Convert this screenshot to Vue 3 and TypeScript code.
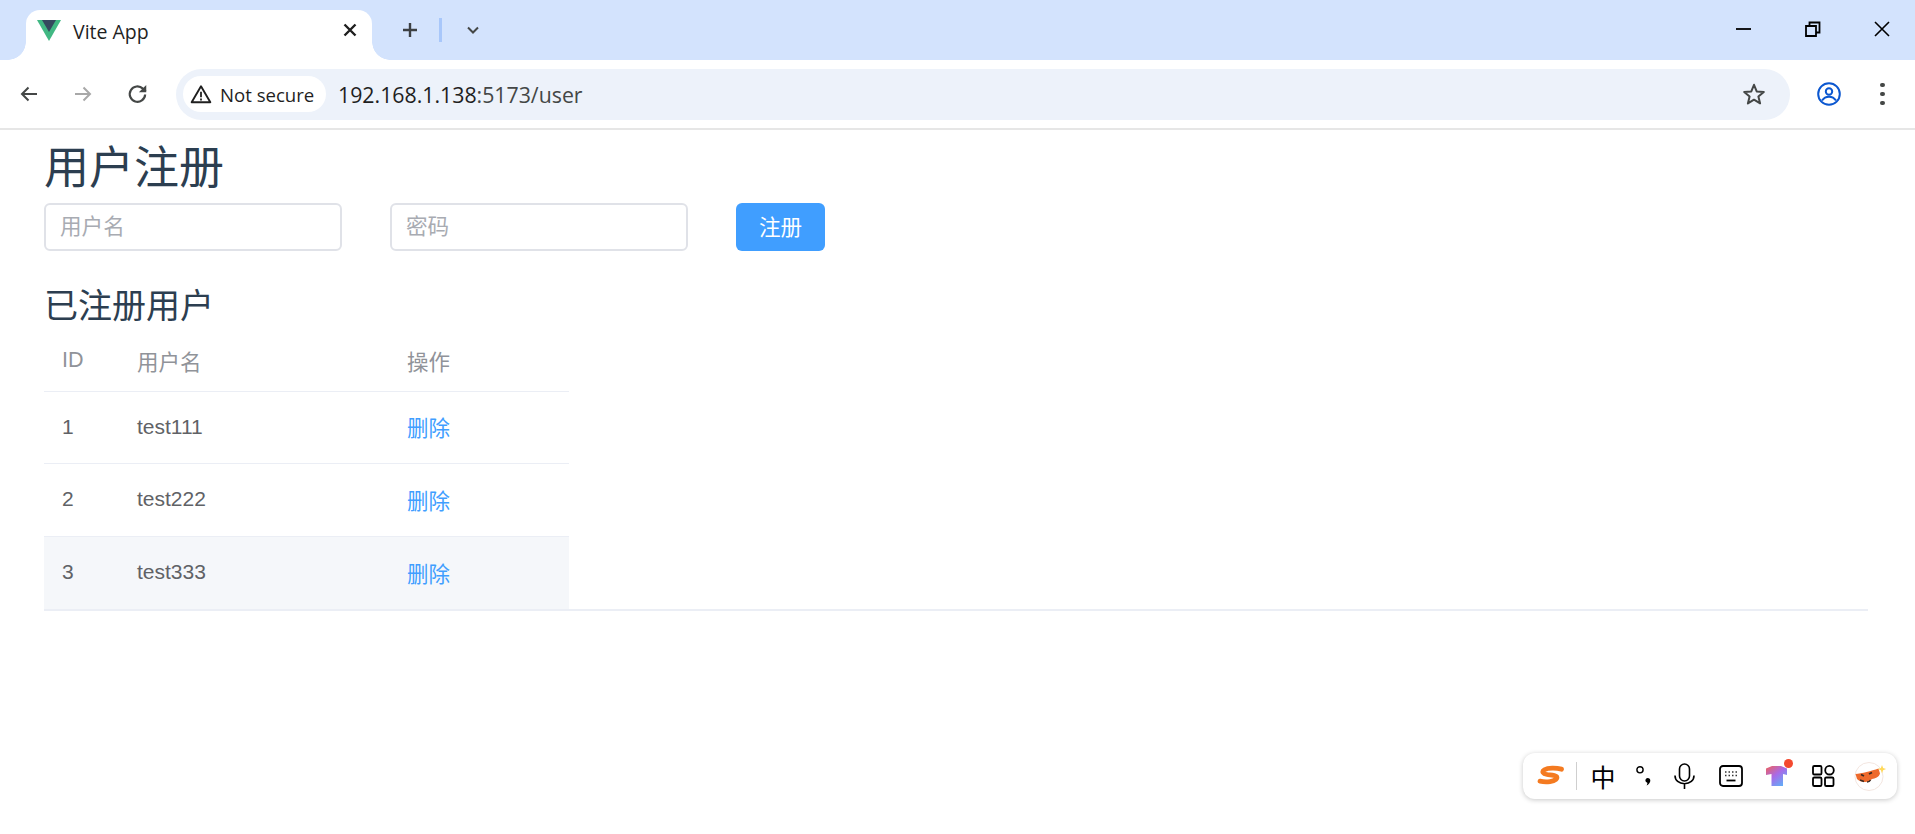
<script setup lang="ts">
interface User { id: number; name: string }
const users: User[] = [
  { id: 1, name: 'test111' },
  { id: 2, name: 'test222' },
  { id: 3, name: 'test333' },
]
</script>

<template>
  <div class="page">
    <header class="tabstrip">
      <div class="tab">
        <svg class="favicon" viewBox="0 0 24 21" width="24" height="21">
          <polygon points="0,0 24,0 12,21" fill="#41b883" />
          <polygon points="5,0 19,0 12,12" fill="#35495e" />
        </svg>
        <span class="tab-title">Vite App</span>
        <svg class="tab-close" viewBox="0 0 14 14" width="14" height="14">
          <path d="M1.500 1.500 12.500 12.500M12.500 1.500 1.500 12.500" stroke="#1f1f1f" stroke-width="2.400" fill="none" />
        </svg>
      </div>
      <svg class="new-tab" viewBox="0 0 16 16" width="16" height="16">
        <path d="M8 1v14M1 8h14" stroke="#3c4043" stroke-width="2.400" fill="none" />
      </svg>
      <span class="strip-sep"></span>
      <svg class="tab-menu" viewBox="0 0 12 8" width="12" height="8">
        <path d="M1 1.500 6 6.500 11 1.500" stroke="#444746" stroke-width="2" fill="none" />
      </svg>
      <div class="win-controls">
        <svg viewBox="0 0 16 16" width="16" height="16"><path d="M0 8h15" stroke="#000" stroke-width="1.800" /></svg>
        <svg viewBox="0 0 16 16" width="16" height="16"><path d="M1 5h10v10H1zM4.500 4.500V1.500h10v10H11.500" stroke="#000" stroke-width="1.800" fill="none" /></svg>
        <svg viewBox="0 0 16 16" width="16" height="16"><path d="M1 1 15 15M15 1 1 15" stroke="#000" stroke-width="1.600" fill="none" /></svg>
      </div>
    </header>

    <nav class="toolbar">
      <svg class="nav-icon" viewBox="0 0 20 20" width="20" height="20">
        <path d="M18 10H3M9.500 3.500 3 10l6.500 6.500" stroke="#444746" stroke-width="2" fill="none" />
      </svg>
      <svg class="nav-icon" viewBox="0 0 20 20" width="20" height="20">
        <path d="M2 10h15M10.500 3.500 17 10l-6.500 6.500" stroke="#a8a8a8" stroke-width="2" fill="none" />
      </svg>
      <svg class="nav-icon" viewBox="0 0 20 20" width="22" height="22">
        <path d="M16.500 10.500a7 7 0 1 1-2.100-5.400L17 7.500" stroke="#444746" stroke-width="2" fill="none" />
        <path d="M17.500 1.800v6.700h-6.700z" fill="#444746" />
      </svg>
      <div class="omnibox">
        <div class="secure-chip">
          <svg viewBox="0 0 20 18" width="22" height="20">
            <path d="M10 2 18.500 16.500H1.500z" stroke="#1f1f1f" stroke-width="1.700" fill="none" stroke-linejoin="round" />
            <path d="M10 7v5M10 13v1.800" stroke="#1f1f1f" stroke-width="1.600" fill="none" />
          </svg>
          <span>Not secure</span>
        </div>
        <span class="url"><b>192.168.1.138</b>:5173/user</span>
        <svg class="star" viewBox="0 0 24 24" width="24" height="24">
          <path d="M12 2.800 14.700 9.400 21.800 9.900 16.400 14.500 18.100 21.400 12 17.700 5.900 21.400 7.600 14.500 2.200 9.900 9.300 9.400z" stroke="#444746" stroke-width="2" fill="none" stroke-linejoin="round" />
        </svg>
      </div>
      <svg class="avatar" viewBox="0 0 24 24" width="24" height="24">
        <circle cx="12" cy="12" r="10.800" stroke="#0b57d0" stroke-width="2" fill="none" />
        <circle cx="12" cy="9.500" r="3.200" stroke="#0b57d0" stroke-width="2" fill="none" />
        <path d="M5 18.500c2-3 4.500-3.800 7-3.800s5 .8 7 3.800" stroke="#0b57d0" stroke-width="2" fill="none" />
      </svg>
      <div class="dots"><i></i><i></i><i></i></div>
    </nav>

    <main class="content">
      <h1>用户注册</h1>
      <form class="reg-form" @submit.prevent>
        <input class="field" type="text" placeholder="用户名" />
        <input class="field" type="password" placeholder="密码" />
        <button class="primary" type="submit"><span>注册</span></button>
      </form>
      <h2>已注册用户</h2>
      <div class="table-wrap">
        <table>
          <colgroup>
            <col class="c1" /><col class="c2" /><col class="c3" />
          </colgroup>
          <thead>
            <tr><th>ID</th><th>用户名</th><th>操作</th></tr>
          </thead>
          <tbody>
            <tr v-for="(u, i) in users" :key="u.id" :class="{ hover: i === 2 }">
              <td>{{ u.id }}</td>
              <td>{{ u.name }}</td>
              <td><a class="del">删除</a></td>
            </tr>
          </tbody>
        </table>
      </div>
    </main>

    <aside class="ime">
      <svg class="ime-s" viewBox="0 0 27 22" width="27" height="22">
        <path d="M24.500 4.200C19 2.800 11 2.700 7.500 4.800c-3 1.800-1.500 4.100 2.500 4.700 3 .5 7.500.3 9.300 1.900 2 1.700-1 4.400-6.300 5.200-3.400.5-7 .3-10-.4" stroke="#f47a20" stroke-width="4.800" fill="none" stroke-linecap="round" />
      </svg>
      <span class="ime-sep"></span>
      <span class="ime-zh">中</span>
      <svg class="ime-dot" viewBox="0 0 15 20" width="15" height="20">
        <circle cx="4" cy="3.800" r="3.100" stroke="#000" stroke-width="1.400" fill="none" />
        <path d="M11.500 12c1.900 0 3 1.300 2.800 3-.2 1.900-1.700 3.500-3.700 4.500.8-1.200 1-2.100.5-2.900-1-.3-1.800-1.200-1.700-2.300.1-1.300 1-2.300 2.100-2.300z" fill="#000" />
      </svg>
      <svg class="ime-mic" viewBox="0 0 21 26" width="21" height="26">
        <rect x="5.500" y="1" width="10" height="17" rx="5" stroke="#000" stroke-width="1.600" fill="none" />
        <path d="M1 12.500c0 5 4 8.200 9.500 8.200s9.500-3.200 9.500-8.200M10.500 20.500V26" stroke="#000" stroke-width="1.600" fill="none" />
      </svg>
      <svg class="ime-kb" viewBox="0 0 24 22" width="24" height="22">
        <rect x="1" y="1" width="22" height="20" rx="3" stroke="#000" stroke-width="1.800" fill="none" />
        <path d="M6 7h1.500M9.500 7H11M13 7h1.500M16.500 7H18M6 10.500h1.500M9.500 10.500H11M13 10.500h1.500M16.500 10.500H18" stroke="#333" stroke-width="1.300" />
        <path d="M7.500 15.500h9" stroke="#000" stroke-width="1.800" />
      </svg>
      <svg class="ime-shirt" viewBox="0 0 27 27" width="27" height="27">
        <defs>
          <linearGradient id="shirt" x1="0" y1="0" x2="0.8" y2="1">
            <stop offset="0" stop-color="#f0615a" />
            <stop offset="0.5" stop-color="#a86ae8" />
            <stop offset="1" stop-color="#5fb0f8" />
          </linearGradient>
        </defs>
        <path d="M0 9.500l6-2.500h9l6 2.500v6.500l-4-1V27H5.500V15L0 16z" fill="url(#shirt)" />
        <circle cx="22.500" cy="4.500" r="4.500" fill="#f4492f" />
      </svg>
      <svg class="ime-apps" viewBox="0 0 23 22" width="23" height="22">
        <rect x="1" y="1" width="8.500" height="8.500" rx="1.300" stroke="#000" stroke-width="1.800" fill="none" />
        <circle cx="17.500" cy="5.200" r="4.300" stroke="#000" stroke-width="1.800" fill="none" />
        <rect x="1" y="12.500" width="8.500" height="8.500" rx="1.300" stroke="#000" stroke-width="1.800" fill="none" />
        <rect x="13" y="12.500" width="8.500" height="8.500" rx="1.300" stroke="#000" stroke-width="1.800" fill="none" />
      </svg>
      <svg class="ime-avatar" viewBox="0 0 33 30" width="33" height="30">
        <circle cx="15" cy="15.500" r="14" fill="#fff" stroke="#f3e6e0" stroke-width="1" />
        <path d="M1.500 13c6-.5 16-3 23-5.500l1.500 5c-1 4-5 5-8 5.500l-3 2.500c-4 1-9.500.5-12-2.500z" fill="#ee6a2c" />
        <path d="M7 13.500l3 1.500M15 13l3-1.500" stroke="#3a2a22" stroke-width="1.800" fill="none" />
        <path d="M6 19l4 1.500M13 21c1.500 0 3-1 3.500-2" stroke="#3a2a22" stroke-width="1.600" fill="none" />
        <path d="M28 4l1.100 3 3 1.100-3 1.100-1.100 3-1.100-3-3-1.100 3-1.100z" fill="#ffd95a" />
      </svg>
    </aside>
  </div>
</template>

<style>
html, body { margin: 0; background: #fff; }
</style>

<style scoped>
.page {
  position: relative;
  width: 1915px;
  height: 834px;
  overflow: hidden;
  background: #fff;
  font-family: "Liberation Sans", "Noto Sans CJK SC", sans-serif;
}
.tabstrip {
  height: 60px;
  box-sizing: border-box;
  padding: 10px 0 0 26px;
  display: flex;
  align-items: flex-start;
  background: #d3e3fd;
}
.tab {
  position: relative;
  width: 346px;
  height: 50px;
  box-sizing: border-box;
  padding: 0 15px 0 11px;
  display: flex;
  align-items: center;
  background: #fff;
  border-radius: 14px 14px 0 0;
}
.tab::before, .tab::after {
  content: "";
  position: absolute;
  bottom: 0;
  width: 18px;
  height: 18px;
}
.tab::before {
  left: -18px;
  background: radial-gradient(circle at 0 0, transparent 17.500px, #fff 18px);
}
.tab::after {
  right: -18px;
  background: radial-gradient(circle at 100% 0, transparent 17.500px, #fff 18px);
}
.favicon { margin-top: -9px; }
.tab-title {
  margin-left: 12px;
  flex: 1;
  font: 19.500px "Open Sans", sans-serif;
  color: #1f1f1f;
  margin-top: -8px;
}
.tab-close { margin-top: -10px; }
.new-tab { margin: 12px 0 0 30px; }
.strip-sep { width: 3px; height: 24px; margin: 8px 0 0 21px; background: #a8c7fa; }
.tab-menu { margin: 16px 0 0 25px; }
.win-controls {
  margin-left: auto;
  display: flex;
  gap: 53px;
  padding: 11px 25px 0 0;
}
.toolbar {
  height: 70px;
  box-sizing: border-box;
  padding: 0 0 0 19px;
  display: flex;
  align-items: center;
  background: #fff;
  border-bottom: 2px solid #e6e6e6;
  border-radius: 10px 10px 0 0;
}
.nav-icon { margin-right: 34px; }
.nav-icon:nth-of-type(3) { margin-right: 27px; }
.omnibox {
  flex: 0 0 1614px;
  height: 51px;
  box-sizing: border-box;
  padding: 0 24px 0 7px;
  display: flex;
  align-items: center;
  background: #edf2fa;
  border-radius: 26px;
}
.secure-chip {
  height: 36px;
  width: 143px;
  box-sizing: border-box;
  padding-left: 7px;
  display: flex;
  align-items: center;
  gap: 8px;
  background: #fff;
  border-radius: 18px;
  font: 18.600px "Open Sans", sans-serif;
  color: #1f1f1f;
  white-space: nowrap;
}
.url {
  margin-left: 12px;
  flex: 1;
  font: 21.300px "Open Sans", sans-serif;
  color: #444746;
}
.url b { font-weight: 400; color: #1f1f1f; }
.avatar { margin-left: 27px; }
.dots {
  margin-left: 39px;
  display: flex;
  flex-direction: column;
  gap: 4.500px;
}
.dots i { width: 4.500px; height: 4.500px; border-radius: 50%; background: #444746; }

.content { padding: 0 47px 0 44px; color: #2c3e50; }
h1 {
  margin: 0;
  padding-top: 4px;
  font-size: 45px;
  font-weight: 400;
  line-height: 69px;
}
.reg-form { display: flex; gap: 48px; }
.field {
  width: 298px;
  height: 48px;
  box-sizing: border-box;
  padding: 0 14px;
  border: 2px solid #e0e2e8;
  border-radius: 6px;
  outline: none;
  font: 21.600px "Liberation Sans", "Noto Sans CJK SC", sans-serif;
  background: #fff;
}
.field::placeholder { color: #a8abb2; opacity: 1; }
.primary {
  width: 89px;
  height: 48px;
  padding: 0 0 3px;
  border: none;
  border-radius: 6px;
  background: #409eff;
  color: #fff;
  font: 21.600px "Liberation Sans", "Noto Sans CJK SC", sans-serif;
}
h2 {
  margin: 30px 0 0;
  font-size: 34px;
  font-weight: 400;
  line-height: 51px;
}
.table-wrap { border-bottom: 2px solid #ebeef5; }
table {
  width: 525px;
  table-layout: fixed;
  border-collapse: collapse;
  font-size: 21px;
  color: #606266;
}
.c1 { width: 75px; }
.c2 { width: 270px; }
.c3 { width: 180px; }
th, td {
  padding: 0 18px;
  text-align: left;
  font-weight: 400;
  border-bottom: 1.500px solid #ebeef5;
  box-sizing: border-box;
}
th { height: 59px; padding-bottom: 2px; color: #909399; font-size: 21.500px; }
td { height: 72.500px; padding-bottom: 1px; }
tbody tr:last-child td { border-bottom: none; }
.hover td { background: #f5f7fa; }
.del { color: #409eff; font-size: 21.500px; }

.ime {
  position: absolute;
  left: 1523px;
  top: 753px;
  width: 374px;
  height: 46px;
  box-sizing: border-box;
  padding-left: 14px;
  display: flex;
  align-items: center;
  background: #fff;
  border-radius: 12px;
  box-shadow: 0 1px 5px rgba(0, 0, 0, 0.22);
}
.ime-sep { width: 1px; height: 28px; background: #cfcfcf; margin-left: 12px; }
.ime-zh { margin-left: 15px; width: 22px; font: 25px/30px "Noto Sans CJK SC", sans-serif; color: #000; display: flex; justify-content: center; }
.ime-dot { margin-left: 22px; }
.ime-mic { margin-left: 23px; }
.ime-kb { margin-left: 24px; }
.ime-shirt { margin: -7px 0 0 23px; }
.ime-apps { margin-left: 19px; }
.ime-avatar { margin-left: 19px; }
</style>
